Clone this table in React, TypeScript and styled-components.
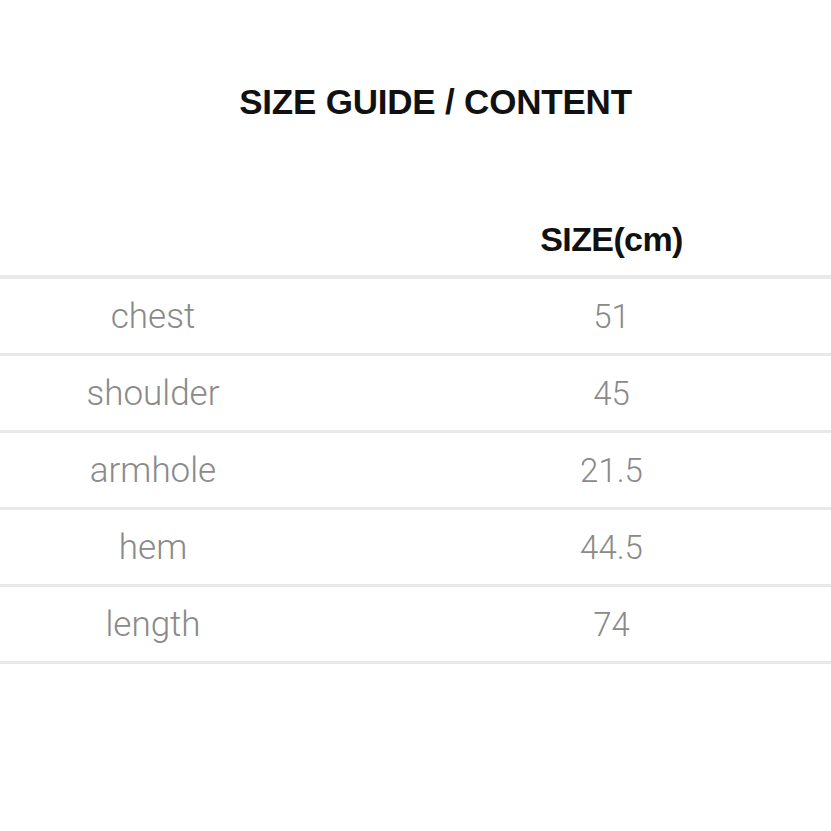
import React from "react";
import styled, { createGlobalStyle } from "styled-components";

const Global = createGlobalStyle`
  html, body { margin: 0; padding: 0; background: #ffffff; }
  body { font-family: "Liberation Sans", Arial, sans-serif; }
`;

const Page = styled.div`
  width: 831px;
  height: 831px;
  background: #ffffff;
  display: flex;
  flex-direction: column;
`;

const Title = styled.h1`
  margin: 0;
  padding: 80px 0 0 40px;
  height: 44px;
  line-height: 44px;
  text-align: center;
  font-family: "Liberation Sans", Arial, sans-serif;
  font-weight: 700;
  font-size: 35px;
  color: #111111;
  letter-spacing: -0.2px;
`;

const Table = styled.div`
  margin-top: 96px;
  display: flex;
  flex-direction: column;
`;

const Row = styled.div<{ $head?: boolean }>`
  display: grid;
  grid-template-columns: 306px 1fr;
  grid-template-rows: 100%;
  height: ${(p) => (p.$head ? "55px" : "74px")};
  align-items: ${(p) => (p.$head ? "start" : "center")};
  border-bottom: ${(p) => (p.$head ? "4px" : "3px")} solid #e9e9e9;
`;

const Label = styled.div`
  text-align: center;
  font-family: Roboto, sans-serif;
  font-weight: 300;
  font-size: 35px;
  color: #8a8a8a;
`;

const Value = styled.div`
  text-align: center;
  padding-left: 86px;
  font-family: Roboto, sans-serif;
  font-weight: 300;
  font-size: 33px;
  color: #8a8a8a;
`;

const Head = styled.div`
  text-align: center;
  padding-left: 86px;
  font-family: "Liberation Sans", Arial, sans-serif;
  font-weight: 700;
  font-size: 34px;
  color: #111111;
  letter-spacing: -0.6px;
`;

const rows: [string, string][] = [
  ["chest", "51"],
  ["shoulder", "45"],
  ["armhole", "21.5"],
  ["hem", "44.5"],
  ["length", "74"],
];

export default function App() {
  return (
    <Page>
      <Global />
      <Title>SIZE GUIDE / CONTENT</Title>
      <Table>
        <Row $head>
          <div />
          <Head>SIZE(cm)</Head>
        </Row>
        {rows.map(([k, v]) => (
          <Row key={k}>
            <Label>{k}</Label>
            <Value>{v}</Value>
          </Row>
        ))}
      </Table>
    </Page>
  );
}
